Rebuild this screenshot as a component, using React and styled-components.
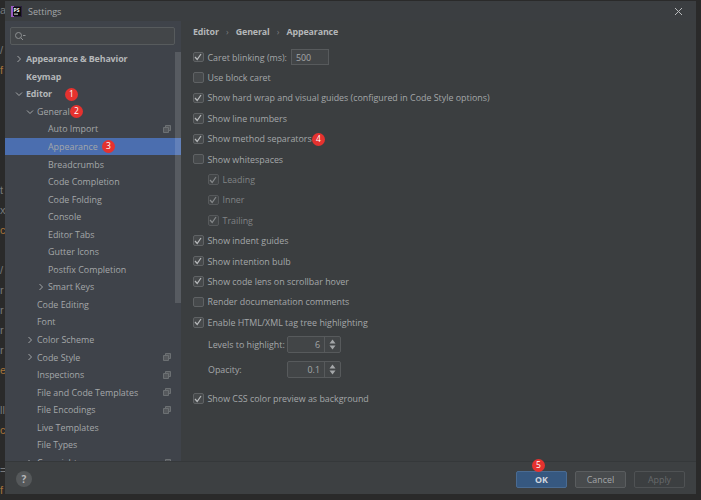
import React from "react";
import styled, { createGlobalStyle } from "styled-components";

const Global = createGlobalStyle`
  html, body { margin: 0; padding: 0; background: #2b2b2b; }
  * { box-sizing: border-box; }
`;
const Page = styled.div`
  width: 701px; height: 500px; display: flex; overflow: hidden; background: #2a2a2a;
  font-family: "Open Sans", "Noto Sans", sans-serif; color: #b3b6b8; font-size: 8.9px;
  padding: 1px 5px 6px 0;
`;
const Gutter = styled.div`
  width: 5px; flex: none; margin-top: -1px; overflow: hidden; display: flex; flex-direction: column;
  font-family: "Liberation Sans", sans-serif; font-size: 11px; line-height: 20px;
`;
const Frag = styled.span`
  display: block; height: 20px; flex: none; color: ${p => p.$c}; white-space: nowrap;
`;
const Dialog = styled.div`
  flex: 1; min-width: 0; display: flex; flex-direction: column; background: #3c3f41;
`;
const TitleBar = styled.div`
  height: 20px; flex: none; display: flex; align-items: center; padding: 0 13px 0 6px; gap: 6px; background: #3b3e41;
  font-size: 9px; color: #a4a7a9;
`;
const Grow = styled.div`flex: 1;`;
const Body = styled.div`flex: 1; min-height: 0; display: flex;`;
const Sidebar = styled.div`
  width: 176px; flex: none; position: relative; overflow: hidden; background: #3f434a;
  padding-top: 6px; display: flex; flex-direction: column;
`;
const Search = styled.div`
  height: 18px; margin: 0 6px 5px 5px; flex: none; border: 1px solid #575b5d; background: #434649; border-radius: 2px;
  display: flex; align-items: center; padding-left: 3px;
`;
const Scroll = styled.div`
  position: absolute; left: 170px; top: 31px; width: 6px; height: 251px; background: rgba(255, 255, 255, .13);
`;
const Row = styled.div`
  height: 17.55px; flex: none; display: flex; align-items: center; position: relative;
  padding-left: ${p => p.$lvl * 11 + 21}px; white-space: nowrap;
  font-weight: ${p => p.$bold ? 700 : 400}; color: ${p => p.$bold ? "#b4b7b9" : "#a4a7a9"};
  letter-spacing: ${p => p.$bold ? "-.12px" : "0"};
  background: ${p => p.$sel ? "#4b6eaf" : "transparent"};
`;
const Arrow = styled.svg`
  position: absolute; left: ${p => p.$lvl * 11 + 10}px; top: 5px; width: 8px; height: 8px;
  fill: none; stroke: #a4a7a9; stroke-width: 1;
`;
const Share = styled.svg`
  position: absolute; left: 158px; top: 5px; width: 8px; height: 8px; fill: #55585c; stroke: #6c7073; stroke-width: 1;
`;
const Badge = styled.span`
  position: absolute; width: 13px; height: 13px; border-radius: 50%; background: #e5322f; color: #fff;
  display: flex; align-items: center; justify-content: center; font-size: 8.5px; line-height: 1; font-weight: 400;
  letter-spacing: 0; left: ${p => p.$x}px; top: ${p => p.$y}px; z-index: 3;
`;
const Content = styled.div`
  flex: 1; min-width: 0; display: flex; flex-direction: column; padding: 2px 0 0 12px; position: relative; background: #3b3e40;
`;
const Crumbs = styled.div`
  height: 16px; display: flex; align-items: center; font-weight: 700; letter-spacing: -.15px; color: #b4b7b9; margin-bottom: 8px;
`;
const Sep = styled.span`width: 17px; text-align: center; font-weight: 400; color: #787b7d;`;
const Opt = styled.div`
  height: 20.4px; flex: none; display: flex; align-items: center; gap: 4px; position: relative;
  margin-left: ${p => p.$indent ? 15 : 0}px; white-space: nowrap;
  margin-top: ${p => p.$mt || 0}px;
  color: ${p => p.$dim ? "#808385" : "#a4a7a9"};
`;
const Box = styled.span`
  width: 10.5px; height: 10.5px; flex: none; border-radius: 2px; border: 1px solid ${p => p.$dim ? "#56595b" : "#5f6264"};
  background: ${p => p.$dim ? "#424547" : "#46494b"}; display: flex; align-items: center; justify-content: center;
`;
const Check = styled.svg`
  width: 8px; height: 8px; fill: none; stroke: ${p => p.$dim ? "#85888a" : "#b9bbbd"}; stroke-width: 1.2;
`;
const Field = styled.span`
  width: 38px; height: 16px; margin-left: 0; border: 1px solid #575a5c; background: #424547; padding-left: 4px;
  display: flex; align-items: center;
`;
const NumRow = styled.div`
  display: flex; align-items: center; padding-left: 15px; height: 18px; flex: none;
  margin-top: ${p => p.$mt}px; color: #a4a7a9;
`;
const NumLabel = styled.span`width: 79px; white-space: nowrap;`;
const Spinner = styled.div`
  width: 54px; height: 17px; display: flex; border: 1px solid #575a5c; background: #424547; border-radius: 2px;
`;
const SpinVal = styled.span`flex: 1; text-align: right; padding-right: 4px; line-height: 15px; border-right: 1px solid #575a5c;`;
const SpinBtn = styled.svg`width: 15px; height: 15px; fill: #a4a7a9;`;
const Footer = styled.div`
  height: 33px; flex: none; display: flex; align-items: center; background: #3d4042; border-top: 1px solid #35383a;
  padding: 2px 11px 0 11px; position: relative;
`;
const Help = styled.div`
  width: 16px; height: 16px; border-radius: 50%; background: #55585a; color: #b5b7b9; display: flex; align-items: center;
  justify-content: center; font-size: 10px; font-weight: 700;
`;
const Btn = styled.button`
  width: 51px; height: 17px; margin-left: ${p => p.$ml}px; padding: 0; border-radius: 2px; font: inherit;
  border: 1px solid ${p => p.$primary ? "#4a6b92" : p.$off ? "#4f5254" : "#5a5d5f"};
  background: ${p => p.$primary ? "#365880" : p.$off ? "#3c3f41" : "#484b4d"};
  color: ${p => p.$primary ? "#d0d6de" : p.$off ? "#67696b" : "#a4a7a9"};
  font-weight: ${p => p.$primary ? 700 : 400};
`;

const share = (
  <Share viewBox="0 0 8 8"><path d="M2.5 2.5V.5h5v5h-2" /><path d="M.5 2.5h5v5h-5z" /></Share>
);
const open = <path d="M1 2.5 4 5.5 7 2.5" />;
const closed = <path d="M2.5 1 5.5 4 2.5 7" />;

const tree = [
  ["Appearance & Behavior", 0, { bold: 1, arrow: closed }],
  ["Keymap", 0, { bold: 1 }],
  ["Editor", 0, { bold: 1, arrow: open, badge: ["1", 60, 3] }],
  ["General", 1, { arrow: open, badge: ["2", 65, 2] }],
  ["Auto Import", 2, { share: 1 }],
  ["Appearance", 2, { sel: 1, badge: ["3", 97, 2] }],
  ["Breadcrumbs", 2, {}],
  ["Code Completion", 2, {}],
  ["Code Folding", 2, {}],
  ["Console", 2, {}],
  ["Editor Tabs", 2, {}],
  ["Gutter Icons", 2, {}],
  ["Postfix Completion", 2, {}],
  ["Smart Keys", 2, { arrow: closed }],
  ["Code Editing", 1, {}],
  ["Font", 1, {}],
  ["Color Scheme", 1, { arrow: closed }],
  ["Code Style", 1, { arrow: closed, share: 1 }],
  ["Inspections", 1, { share: 1 }],
  ["File and Code Templates", 1, { share: 1 }],
  ["File Encodings", 1, { share: 1 }],
  ["Live Templates", 1, {}],
  ["File Types", 1, {}],
  ["Copyright", 1, { arrow: closed, share: 1 }],
];

const opts = [
  ["Caret blinking (ms):", 1, { field: "500" }],
  ["Use block caret", 0, {}],
  ["Show hard wrap and visual guides (configured in Code Style options)", 1, {}],
  ["Show line numbers", 1, {}],
  ["Show method separators", 1, { badge: 1 }],
  ["Show whitespaces", 0, {}],
  ["Leading", 1, { sub: 1 }],
  ["Inner", 1, { sub: 1 }],
  ["Trailing", 1, { sub: 1 }],
  ["Show indent guides", 1, {}],
  ["Show intention bulb", 1, {}],
  ["Show code lens on scrollbar hover", 1, {}],
  ["Render documentation comments", 0, {}],
  ["Enable HTML/XML tag tree highlighting", 1, {}],
];

const CheckBox = ({ on, dim }) => (
  <Box $dim={dim}>{on ? <Check $dim={dim} viewBox="0 0 8 8"><path d="M1 4 3.2 6.5 7 1" /></Check> : null}</Box>
);
const Spin = ({ v }) => (
  <Spinner>
    <SpinVal>{v}</SpinVal>
    <SpinBtn viewBox="0 0 15 15"><path d="M7.5 2.5 10.5 6.5h-6zM7.5 12.5 4.5 8.5h6z" /></SpinBtn>
  </Spinner>
);

const gray = "#77797b";
const orange = "#a8743a";
const gutter = [
  ["a", gray], ["", gray], ["/", gray], ["f", orange], ["", gray], ["", gray], ["", gray], ["", gray], ["", gray],
  ["t", gray], ["x", gray], ["c", orange], ["", gray], ["/", gray], ["r", gray], ["r", gray], ["r", gray], ["r", gray],
  ["e", orange], ["", gray], ["ll", gray], ["c", orange], ["", gray], ["=", gray], ["f", orange],
];

export default function App() {
  return (
    <Page>
      <Global />
      <Gutter>
        {gutter.map(([t, c], i) => <Frag key={i} $c={c}>{t}</Frag>)}
      </Gutter>
      <Dialog>
        <TitleBar>
          <svg width="11" height="11" viewBox="0 0 11 11">
            <rect width="11" height="11" fill="#2a1f3d" />
            <rect x="0" y="0" width="3" height="11" fill="#9a5bc0" />
            <rect x="2" y="1" width="8" height="9" fill="#0d0d0d" />
            <rect x="3" y="7.6" width="4" height="1" fill="#e0e0e0" />
            <text x="2.6" y="6.4" fontSize="5" fontWeight="700" fill="#fff" fontFamily="Open Sans">PS</text>
          </svg>
          Settings
          <Grow />
          <svg width="9" height="9" viewBox="0 0 9 9" fill="none" stroke="#b8babc" strokeWidth="1"><path d="M1 1l7 7M8 1l-7 7" /></svg>
        </TitleBar>
        <Body>
          <Sidebar>
            <Search>
              <svg width="12" height="10" viewBox="0 0 12 10" fill="none" stroke="#8e9193" strokeWidth="1">
                <circle cx="4.5" cy="4.5" r="3" /><path d="M6.8 6.8 9 9M9 4.5h2.5" />
              </svg>
            </Search>
            {tree.map(([t, lvl, o]) => (
              <Row key={t} $lvl={lvl} $bold={o.bold} $sel={o.sel}>
                {o.arrow ? <Arrow $lvl={lvl} viewBox="0 0 8 8">{o.arrow}</Arrow> : null}
                {t}
                {o.share ? share : null}
                {o.badge ? <Badge $x={o.badge[1]} $y={o.badge[2]}>{o.badge[0]}</Badge> : null}
              </Row>
            ))}
            <Scroll />
          </Sidebar>
          <Content>
            <Crumbs>Editor<Sep>›</Sep>General<Sep>›</Sep>Appearance</Crumbs>
            {opts.map(([t, on, o]) => (
              <Opt key={t} $indent={o.sub} $dim={o.sub}>
                <CheckBox on={on} dim={o.sub} />
                {t}
                {o.field ? <Field>{o.field}</Field> : null}
                {o.badge ? <Badge $x={119} $y={4}>4</Badge> : null}
              </Opt>
            ))}
            <NumRow $mt={3}><NumLabel>Levels to highlight:</NumLabel><Spin v="6" /></NumRow>
            <NumRow $mt={7}><NumLabel>Opacity:</NumLabel><Spin v="0.1" /></NumRow>
            <Opt $mt={10}><CheckBox on />Show CSS color preview as background</Opt>
          </Content>
        </Body>
        <Footer>
          <Help>?</Help>
          <Grow />
          <Btn $primary $ml={0}>OK</Btn>
          <Badge $x={527} $y={-3}>5</Badge>
          <Btn $ml={8}>Cancel</Btn>
          <Btn $off $ml={8}>Apply</Btn>
        </Footer>
      </Dialog>
    </Page>
  );
}
